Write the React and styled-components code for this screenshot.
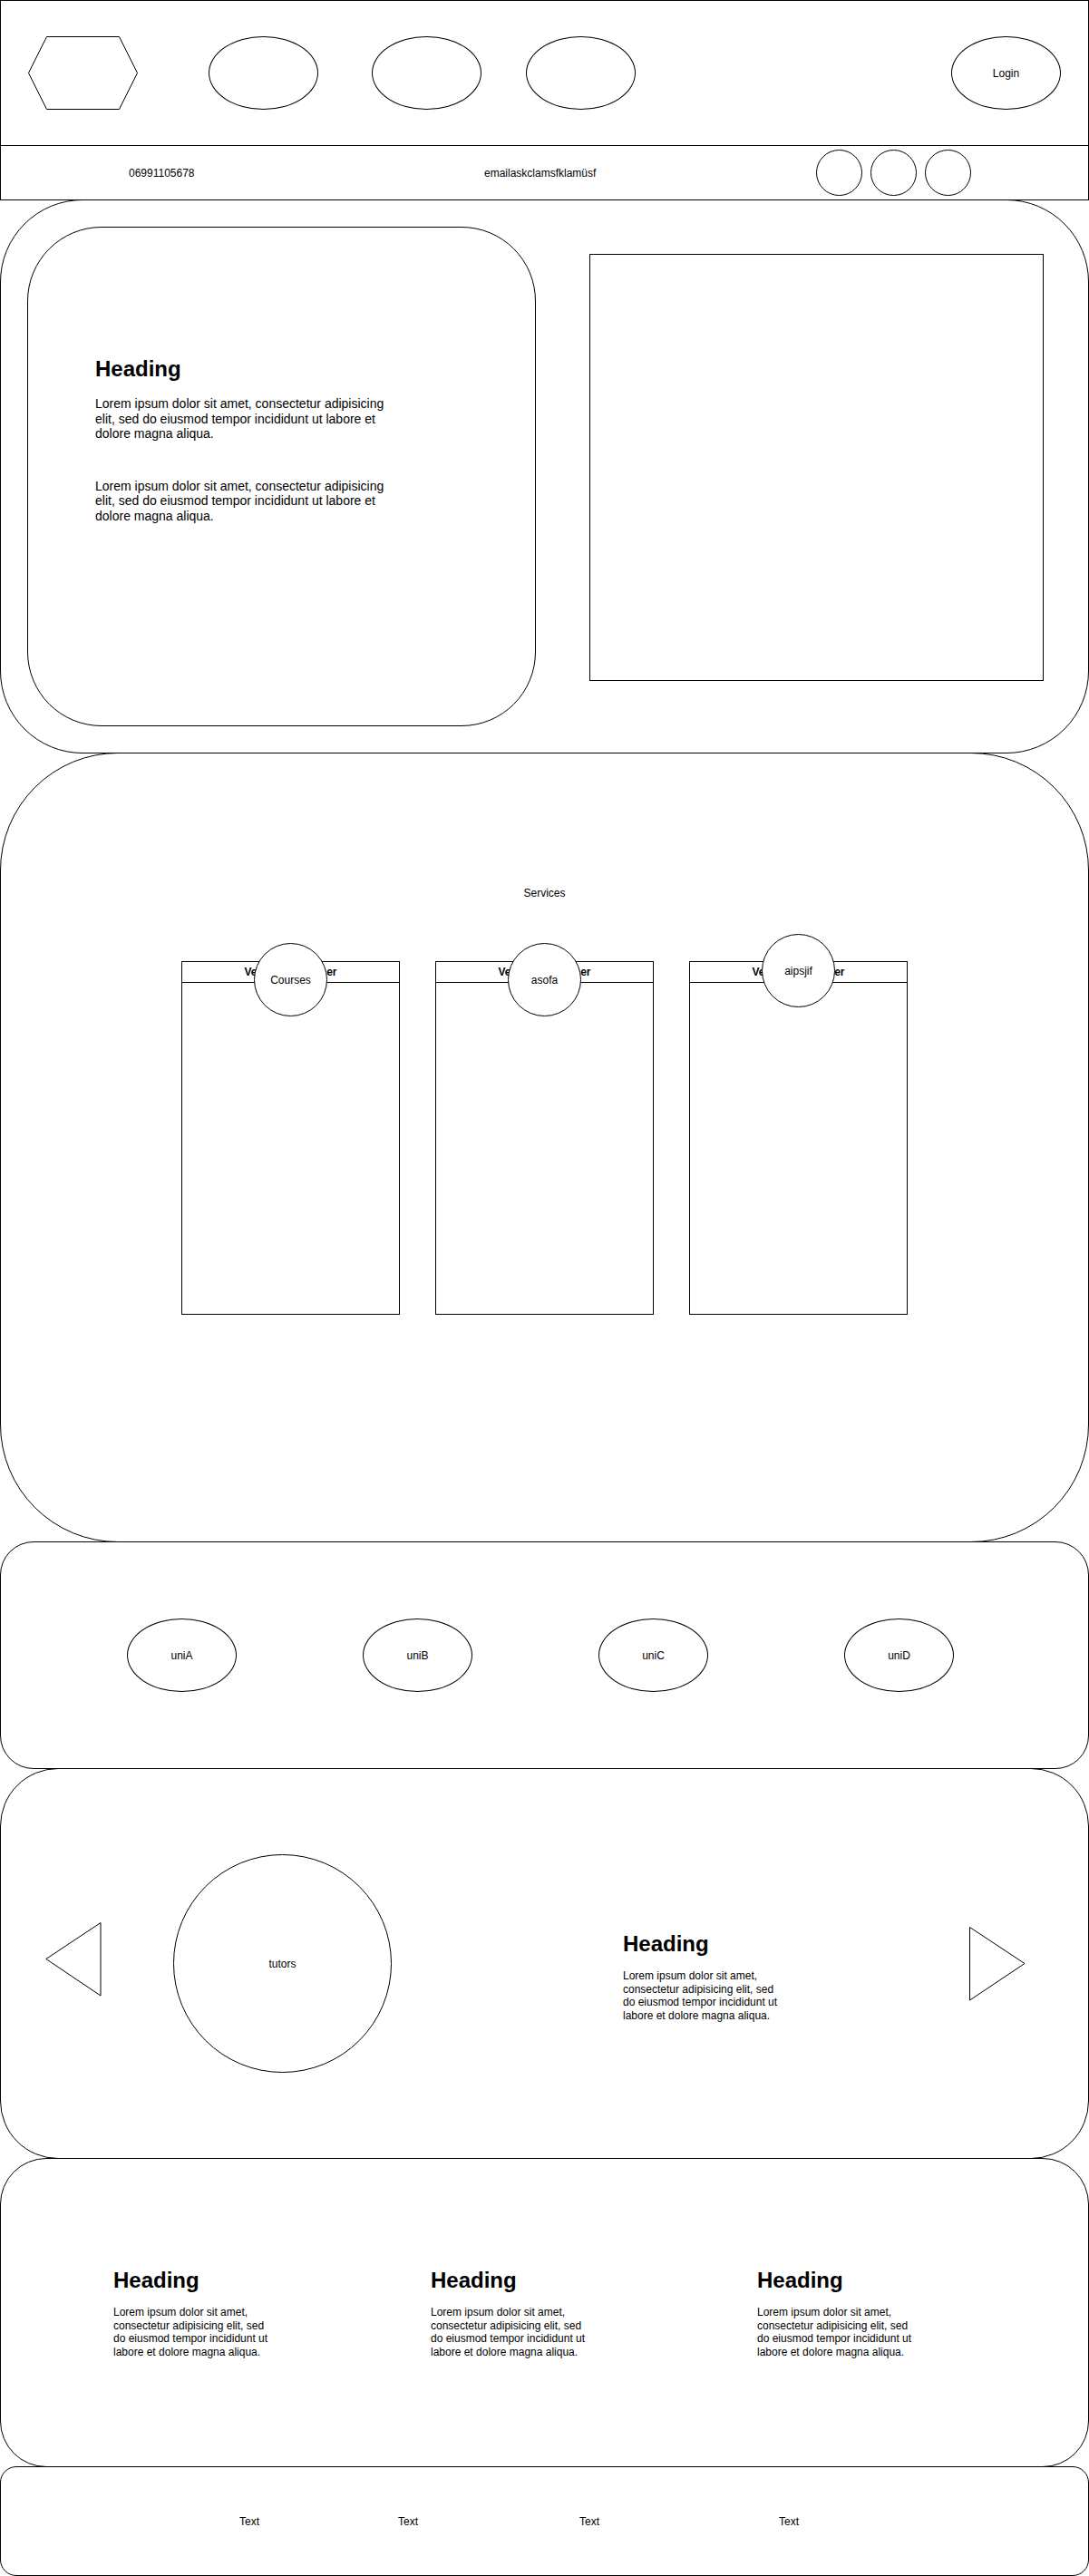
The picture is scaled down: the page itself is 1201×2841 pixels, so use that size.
import React from 'react';
import styled, { createGlobalStyle } from 'styled-components';

const GlobalStyle = createGlobalStyle`
  * {
    box-sizing: border-box;
  }
  body {
    margin: 0;
    background: #fff;
    color: #000;
    font-family: "Liberation Sans", Arial, sans-serif;
    font-size: 12px;
  }
`;

const Page = styled.div`
  width: 1201px;
  display: flex;
  flex-direction: column;
`;

const Header = styled.header`
  height: 161px;
  border: 1px solid #000;
  display: flex;
  align-items: center;
  padding: 0 30px 0 30px;
`;

const Oval = styled.div`
  width: ${(p) => p.$w || 121}px;
  height: ${(p) => p.$h || 81}px;
  margin-left: ${(p) => (p.$ml === 'auto' ? 'auto' : `${p.$ml || 0}px`)};
  border: 1px solid #000;
  border-radius: 50%;
  background: #fff;
  display: flex;
  align-items: center;
  justify-content: center;
  flex-shrink: 0;
  font-size: 12px;
`;

const InfoBar = styled.div`
  height: 61px;
  margin-top: -1px;
  border: 1px solid #000;
  display: grid;
  grid-template-columns: 392px 366px auto;
  align-items: center;
  padding-left: 141px;
`;

const Socials = styled.div`
  display: flex;
  gap: 9px;
`;

const Section = styled.section`
  height: ${(p) => p.$h}px;
  margin-top: -1px;
  border: 1px solid #000;
  border-radius: ${(p) => p.$r}px;
`;

const Hero = styled(Section)`
  display: flex;
  align-items: flex-start;
  padding: 29px 0 0 29px;
`;

const HeroCard = styled.div`
  width: 561px;
  height: 551px;
  border: 1px solid #000;
  border-radius: 82px;
  padding: 141px 0 0 74px;
`;

const HeroImage = styled.div`
  width: 501px;
  height: 471px;
  margin: 30px 0 0 59px;
  border: 1px solid #000;
`;

const Heading = styled.h2`
  margin: 0;
  font-size: 24px;
  line-height: 29px;
  font-weight: bold;
`;

const Text = styled.p`
  margin: ${(p) => p.$mt || 0}px 0 0;
  width: ${(p) => p.$w}px;
  font-size: ${(p) => p.$size}px;
  line-height: ${(p) => p.$lh}px;
`;

const Services = styled(Section)`
  display: flex;
  flex-direction: column;
  align-items: center;
  padding-top: 147px;
`;

const Title = styled.div`
  font-size: 12px;
  line-height: 14px;
`;

const CardRow = styled.div`
  display: flex;
  gap: 39px;
  margin-top: 68px;
`;

const Container = styled.div`
  position: relative;
  width: 241px;
  height: 390px;
  border: 1px solid #000;
`;

const ContainerHeader = styled.div`
  height: 23px;
  border-bottom: 1px solid #000;
  display: flex;
  align-items: center;
  justify-content: center;
  font-weight: bold;
  font-size: 12px;
`;

const Badge = styled(Oval)`
  position: absolute;
  left: 79px;
  top: ${(p) => p.$top}px;
`;

const Unis = styled(Section)`
  display: flex;
  align-items: center;
  padding-left: 139px;
`;

const Tutors = styled(Section)`
  display: flex;
  align-items: center;
  padding: 0 69px 0 49px;
`;

const Arrow = styled.svg`
  flex-shrink: 0;
  margin-bottom: ${(p) => p.$mb || 0}px;
`;

const TextBlock = styled.div`
  margin-top: ${(p) => p.$mt || 0}px;
  margin-left: ${(p) => p.$ml || 0}px;
`;

const Spacer = styled.div`
  flex: 1;
`;

const Features = styled(Section)`
  display: grid;
  grid-template-columns: 350px 360px auto;
  align-items: center;
  padding-left: 124px;
`;

const Footer = styled(Section)`
  display: grid;
  grid-template-columns: 175px 200px 220px auto;
  align-items: center;
  padding-left: 263px;
`;

const lorem =
  'Lorem ipsum dolor sit amet, consectetur adipisicing elit, sed do eiusmod tempor incididunt ut labore et dolore magna aliqua.';

const Block = ({ mt, ml }) => (
  <TextBlock $mt={mt} $ml={ml}>
    <Heading>Heading</Heading>
    <Text $mt={14} $w={182} $size={12} $lh={14.5}>
      {lorem}
    </Text>
  </TextBlock>
);

const badges = [
  { label: 'Courses', top: -21 },
  { label: 'asofa', top: -21 },
  { label: 'aipsjif', top: -31 },
];

export default function App() {
  return (
    <Page>
      <GlobalStyle />
      <Header>
        <svg width="122" height="82" viewBox="0 0 122 82">
          <polygon
            points="20.5,0.5 100.5,0.5 120.5,40.5 100.5,80.5 20.5,80.5 0.5,40.5"
            fill="#fff"
            stroke="#000"
          />
        </svg>
        <Oval $ml={77} />
        <Oval $ml={59} />
        <Oval $ml={49} />
        <Oval $ml="auto">Login</Oval>
      </Header>

      <InfoBar>
        <span>06991105678</span>
        <span>emailaskclamsfklamüsf</span>
        <Socials>
          <Oval $w={51} $h={51} />
          <Oval $w={51} $h={51} />
          <Oval $w={51} $h={51} />
        </Socials>
      </InfoBar>

      <Hero $h={611} $r={91}>
        <HeroCard>
          <Heading>Heading</Heading>
          <Text $mt={16} $w={340} $size={14} $lh={16.5}>
            {lorem}
          </Text>
          <Text $mt={41} $w={340} $size={14} $lh={16.5}>
            {lorem}
          </Text>
        </HeroCard>
        <HeroImage />
      </Hero>

      <Services $h={871} $r={130}>
        <Title>Services</Title>
        <CardRow>
          {badges.map((b) => (
            <Container key={b.label}>
              <ContainerHeader>Vertical Container</ContainerHeader>
              <Badge $w={81} $h={81} $top={b.top}>
                {b.label}
              </Badge>
            </Container>
          ))}
        </CardRow>
      </Services>

      <Unis $h={251} $r={37}>
        <Oval>uniA</Oval>
        <Oval $ml={139}>uniB</Oval>
        <Oval $ml={139}>uniC</Oval>
        <Oval $ml={150}>uniD</Oval>
      </Unis>

      <Tutors $h={431} $r={64}>
        <Arrow width="62" height="82" viewBox="0 0 62 82" $mb={10}>
          <polygon points="61,0.5 61,81 0.8,40.5" fill="#fff" stroke="#000" />
        </Arrow>
        <Oval $w={241} $h={241} $ml={79}>
          tutors
        </Oval>
        <Block mt={28} ml={255} />
        <Spacer />
        <Arrow width="62" height="82" viewBox="0 0 62 82">
          <polygon points="0.5,0.5 0.5,81 61,40.5" fill="#fff" stroke="#000" />
        </Arrow>
      </Tutors>

      <Features $h={341} $r={51}>
        <Block />
        <Block />
        <Block />
      </Features>

      <Footer $h={121} $r={18}>
        <span>Text</span>
        <span>Text</span>
        <span>Text</span>
        <span>Text</span>
      </Footer>
    </Page>
  );
}
